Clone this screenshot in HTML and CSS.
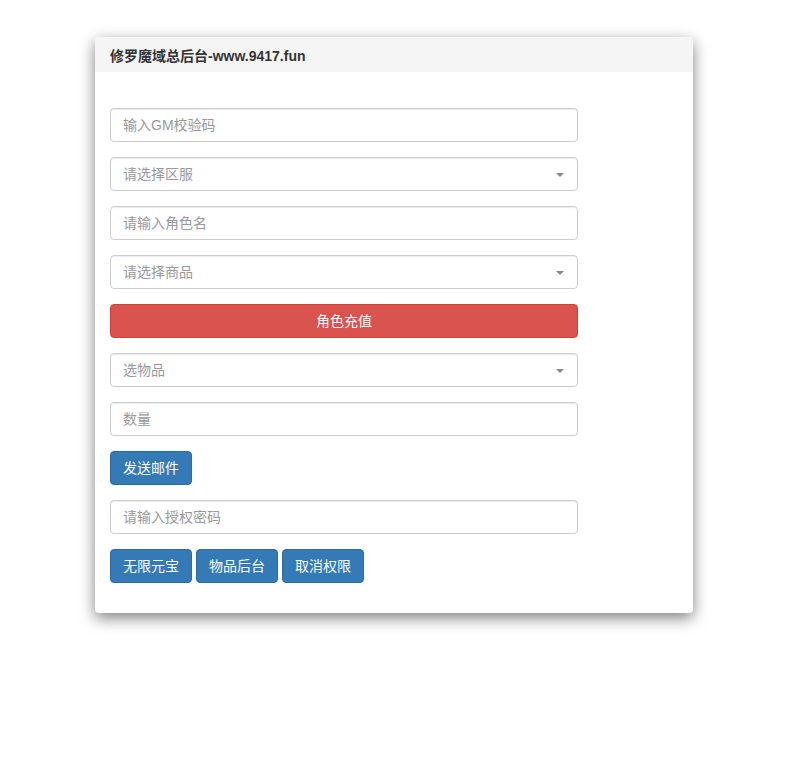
FILE: index.html
```html
<!DOCTYPE html>
<html>
<head>
<meta charset="utf-8">
<link rel="stylesheet" href="styles.css">
</head>
<body>
<div class="page">
<div class="panel">
  <div class="panel-heading">修罗魔域总后台-www.9417.fun</div>
  <div class="panel-body">
    <div class="field"><input class="control" placeholder="输入GM校验码"></div>
    <div class="field"><div class="control select">请选择区服<span class="caret"></span></div></div>
    <div class="field"><input class="control" placeholder="请输入角色名"></div>
    <div class="field"><div class="control select">请选择商品<span class="caret"></span></div></div>
    <div class="field"><button class="btn btn-danger btn-block">角色充值</button></div>
    <div class="field"><div class="control select">选物品<span class="caret"></span></div></div>
    <div class="field"><input class="control" placeholder="数量"></div>
    <div class="field"><button class="btn btn-primary">发送邮件</button></div>
    <div class="field"><input class="control" placeholder="请输入授权密码"></div>
    <div class="field row"><button class="btn btn-primary">无限元宝</button><button class="btn btn-primary">物品后台</button><button class="btn btn-primary">取消权限</button></div>
  </div>
</div>
</div>
</body>
</html>
```

FILE: styles.css
```css
* { box-sizing: border-box; }
html, body { background: #fff; }
body {
  margin: 0;
  font-family: "Liberation Sans", "Noto Sans CJK SC", sans-serif;
  font-size: 14px;
  color: #333;
}
.page {
  min-height: 760px;
  padding: 37px 0 60px 95px;
}
.panel {
  width: 598px;
  background: #fff;
  border-radius: 4px;
  box-shadow: 0 5px 15px rgba(0,0,0,0.5);
  overflow: hidden;
}
.panel-heading {
  background: #f5f5f5;
  height: 35px;
  padding: 0 15px;
  line-height: 38px;
  font-weight: bold;
  font-size: 14px;
  color: #333;
}
.panel-body {
  padding: 36px 15px 30px;
  display: flex;
  flex-direction: column;
  gap: 15px;
}
.field { width: 468px; }
.row { display: flex; gap: 4px; }
.control {
  display: block;
  width: 100%;
  height: 34px;
  padding: 6px 12px;
  border: 1px solid #ccc;
  border-radius: 4px;
  font-family: "Liberation Sans", "Noto Sans CJK SC", sans-serif;
  font-size: 14px;
  line-height: 20px;
  color: #555;
  background: #fff;
  box-shadow: inset 0 1px 1px rgba(0,0,0,0.075);
  outline: none;
}
.control::placeholder { color: #999; }
.select {
  position: relative;
  color: #999;
}
.caret {
  position: absolute;
  right: 13px;
  top: 15px;
  width: 0;
  height: 0;
  border-left: 4px solid transparent;
  border-right: 4px solid transparent;
  border-top: 4px solid #888;
}
.btn {
  display: inline-block;
  height: 34px;
  padding: 6px 12px;
  border: 1px solid transparent;
  border-radius: 4px;
  font-family: "Liberation Sans", "Noto Sans CJK SC", sans-serif;
  font-size: 14px;
  line-height: 20px;
  color: #fff;
  cursor: pointer;
}
.btn-primary { background: #337ab7; border-color: #2e6da4; width: 82px; }
.btn-danger { background: #d9534f; border-color: #d43f3a; }
.btn-block { display: block; width: 100%; }
```
